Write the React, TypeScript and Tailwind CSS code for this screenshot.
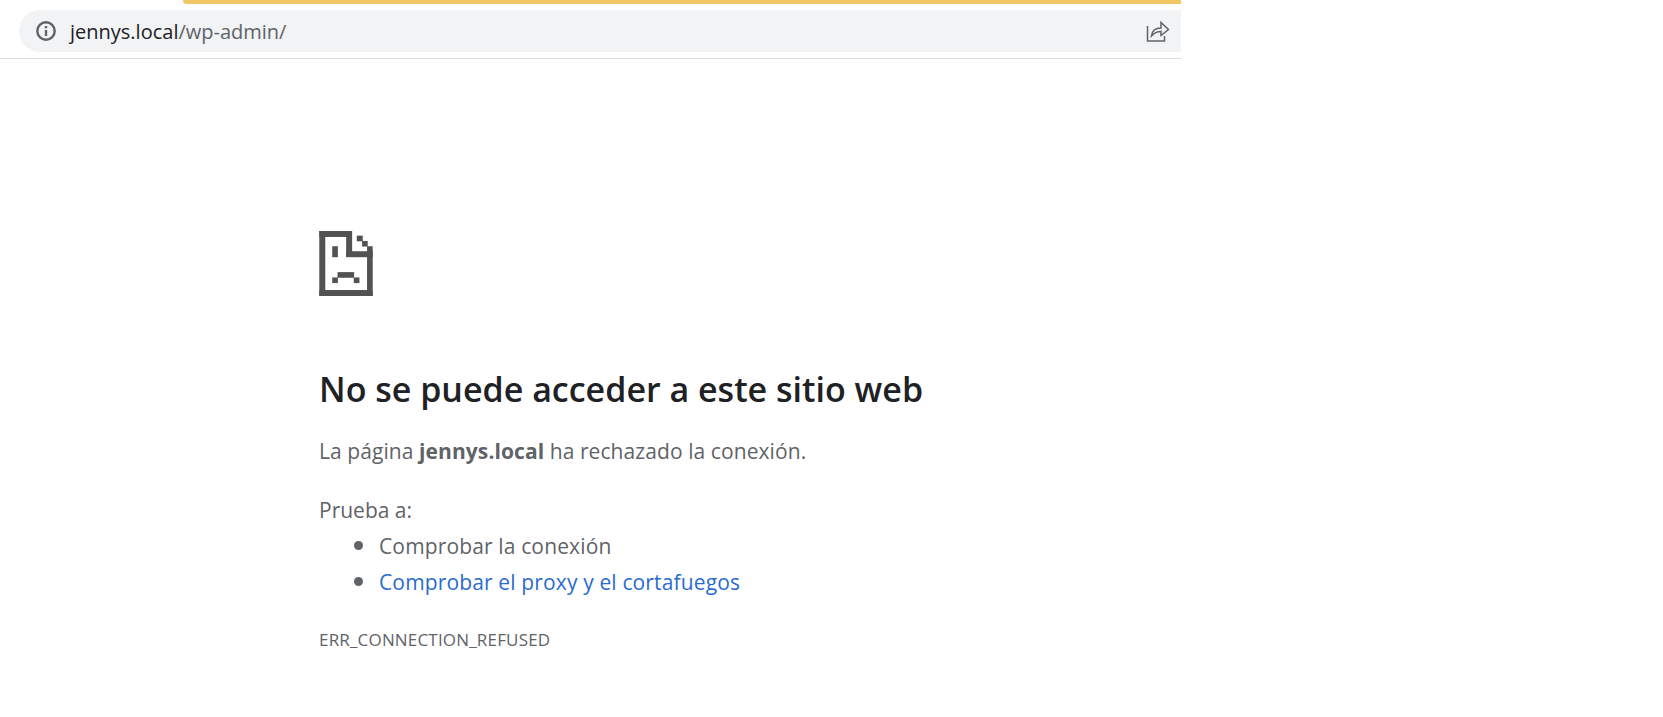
const font = "font-['Open_Sans','Noto_Sans',sans-serif]";

function SadPage() {
  // coordinates taken from the 3x crop of the reference
  return (
    <svg width="54" height="65" viewBox="57 32 161 196" fill="#525252">
      <rect x="57" y="32" width="18" height="196" />
      <rect x="57" y="32" width="98" height="18" />
      <rect x="57" y="210" width="161" height="18" />
      <rect x="201" y="78" width="17" height="150" />
      <rect x="138" y="32" width="18" height="78" />
      <rect x="138" y="93" width="80" height="18" />
      <rect x="170" y="46" width="18" height="17" />
      <rect x="186" y="62" width="17" height="17" />
      <rect x="96" y="78" width="17" height="33" />
      <rect x="112" y="156" width="50" height="17" />
      <rect x="96" y="172" width="17" height="17" />
      <rect x="161" y="172" width="17" height="17" />
    </svg>
  );
}

function AddressBar() {
  return (
    <div className="w-[1181px] border-b border-[#dadce0] pb-[6px]">
      <div className="ml-[183px] h-[4px] rounded-bl-[6px] bg-[#f0c566]" />
      <div className="mt-[6px] ml-[19px] flex h-[42px] items-center rounded-l-[21px] bg-[#f1f3f4] pl-[16px] pr-[11px]">
        <svg width="22" height="22" viewBox="0 0 24 24" fill="none" stroke="#5f6368" strokeWidth="2.6">
          <circle cx="12" cy="12" r="9.5" />
          <path d="M12 11v6.5M12 6.5v2.4" />
        </svg>
        <div className="ml-[13px] flex-1 text-[20px] leading-[31px] text-[#202124]">
          jennys.local<span className="text-[#5f6368]">/wp-admin/</span>
        </div>
        <svg width="24" height="22" viewBox="0 0 24 22" fill="none" stroke="#5f6368" strokeWidth="1.5">
          <path d="M1.5 6v15h17v-5" />
          <path d="M5.5 16c.5-5 4-8 9.5-8V2.5L22.5 9.5 15 15.5V11.5c-4 0-7 1.5-9.5 4.5z" />
        </svg>
      </div>
    </div>
  );
}

export default function App() {
  return (
    <div className={`min-h-[717px] bg-white ${font}`}>
      <AddressBar />
      <main className="pl-[319px] pt-[172px] text-[#5f6368]">
        <SadPage />
        <h1 className="mt-[71px] text-[34px] leading-[44px] font-semibold text-[#202124]">
          No se puede acceder a este sitio web
        </h1>
        <p className="mt-[22px] text-[21px] leading-[36px] tracking-[0.08px]">
          La página <b className="font-bold">jennys.local</b> ha rechazado la conexión.
        </p>
        <p className="mt-[23px] text-[21px] leading-[36px]">Prueba a:</p>
        <ul className="-mt-[2px] list-disc pl-[60px] text-[21px] leading-[36px] tracking-[0.14px] marker:text-[26px] marker:text-[#5f6368]">
          <li className="h-[36px]">Comprobar la conexión</li>
          <li className="h-[36px]">
            <a className="text-[#2a6bcf]">Comprobar el proxy y el cortafuegos</a>
          </li>
        </ul>
        <p className="mt-[24px] text-[17px] leading-[36px] tracking-[0.18px]">ERR_CONNECTION_REFUSED</p>
      </main>
    </div>
  );
}
